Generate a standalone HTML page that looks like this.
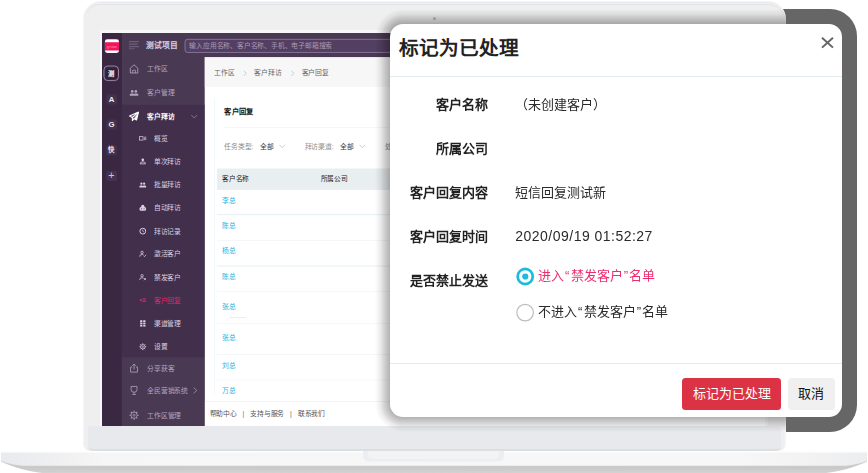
<!DOCTYPE html>
<html lang="zh-CN">
<head>
<meta charset="utf-8">
<title>标记为已处理</title>
<style>
*{box-sizing:border-box;margin:0;padding:0}
html,body{width:868px;height:473px;overflow:hidden;background:#fff}
body{position:relative;font-family:"Liberation Sans",sans-serif;color:#333}
.abs{position:absolute}
/* ---------- laptop ---------- */
#dark{left:376px;top:9px;width:481px;height:423px;border-radius:27px;background:#666}
#base{left:0;top:450px;width:868px;height:23px}
#lid{left:82.5px;top:1.3px;width:703.4px;height:449.6px;border-radius:18px 18px 7px 7px;background:#efefef;overflow:hidden;border:1.5px solid #f5f5f6;border-top-width:1px;border-bottom-width:0;box-shadow:inset 0 1px 0 0 #e9eaed,inset 0 2px 0 0 #f1f1f2,inset 0 3px 0 0 #e1e5e7,inset 1px 0 0 0 #f1f1f2,inset -1px 0 0 0 #f1f1f2}
#lid .chin{left:4.2px;right:3.9px;top:423.6px;bottom:0;background:#e8e9ec;border-radius:0 0 5px 5px;border-bottom:2.5px solid #dddee0}
#lid .cam{left:349.3px;top:15.2px;width:3px;height:3px;border-radius:50%;background:#b9b9bb}
#screenrim{left:100px;top:30px;width:667.5px;height:396.4px;background:#f7f7f9}
#screen{left:102.1px;top:32.7px;width:663.4px;height:393.7px;overflow:hidden;background:#fff}
#app{left:0;top:0;width:1366px;height:811px;transform:scale(.48565);transform-origin:0 0;font-size:14px;background:#4a3953}
/* ---------- app ---------- */
#strip{left:0;top:0;width:41px;height:811px;background:#3a2843}
#hdr{left:41px;top:0;width:1325px;height:50px;background:#4a3953}
#menu{left:41px;top:50px;width:170px;height:761px;background:#4a3953}
#menu .sub{left:0;top:98px;width:170px;height:520px;background:#412f4c}
.mi{left:0;width:170px;height:24px;line-height:24px;margin-top:-12px;color:#b1a4bd;white-space:nowrap}
.mi span{position:absolute;left:52px;top:0}
.mi svg{position:absolute;left:14px;top:1px;width:22px;height:22px}
.mi.s{color:#d9d1e0}
.mi.s span{left:65.5px}
.mi.s svg{left:35px;top:4px;width:16px;height:16px}
.mi.on{color:#e5246b}
.sbx{left:8.5px;width:22px;height:21px;border-radius:4px;background:#43314e;color:#efe9f3;font-weight:bold;font-size:16px;line-height:21px;text-align:center}

/* ---------- content ---------- */
#cont{left:211px;top:50px;width:1155px;height:761px;background:#fff;color:#333}
#cont .t{position:absolute;white-space:nowrap;height:20px;line-height:20px;margin-top:-10px}
#bc{left:0;top:0;width:1155px;height:61px;background:#f7f7f8}
#card{left:20px;top:83px;width:1200px;height:611px;border:1.5px solid #dcedf5;border-bottom:none;border-radius:4px 4px 0 0}
.sep{left:26px;width:1200px;height:1.3px;background:#e6eef3}
.nm{color:#1db1de}
#ft{left:0;top:708px;width:1155px;height:53px;background:#fff;border-top:1.5px solid #e4eaee;color:#555}
/* ---------- modal ---------- */
#shclip{left:83.3px;top:1.3px;width:702.6px;height:449.6px;border-radius:18px 18px 7px 7px;overflow:hidden}
#shclip i{position:absolute;display:block}
#modal{left:390px;top:24px;width:452px;height:393px;border-radius:13px;background:#fff;font-size:13px;color:#333}
#modal .ttl{left:8.6px;top:11.5px;height:25px;line-height:25px;font-size:19.65px;font-weight:bold;color:#222;white-space:nowrap}
#modal .ln{left:0;width:452.1px;height:1px;background:#e3ebee}
#modal .lb{left:0;width:97.6px;text-align:right;font-weight:bold;color:#222;height:18px;line-height:18px;margin-top:-9px;white-space:nowrap}
#modal .vl{color:#2a2a2a;left:124.8px;height:18px;line-height:18px;margin-top:-9px;white-space:nowrap}
.rd{left:126.1px;width:17.6px;height:17.6px;border-radius:50%;margin-top:-8.8px}
.q{font-weight:normal;margin:0 1.2px}
.btn{top:354px;height:31.5px;line-height:31px;border-radius:3.5px;text-align:center;white-space:nowrap}
</style>
</head>
<body>
<div id="dark" class="abs"></div>
<svg id="base" class="abs" viewBox="0 0 868 23">
<defs><linearGradient id="bg1" x1="0" x2="1" y1="0" y2="0"><stop offset="0" stop-color="#e8eaee"/><stop offset=".06" stop-color="#efeff1"/><stop offset=".12" stop-color="#f6f6f6"/><stop offset=".85" stop-color="#f7f7f7"/><stop offset=".95" stop-color="#f1f1f2"/><stop offset="1" stop-color="#ecedef"/></linearGradient>
<linearGradient id="bg2" x1="0" x2="0" y1="0" y2="1"><stop offset="0" stop-color="#d8d8d8"/><stop offset=".75" stop-color="#c9c9c9"/><stop offset="1" stop-color="#d2d2d2"/></linearGradient></defs>
<path d="M1 1.5 H867 V11.5 C858 16 840 21.5 826 23 H42 C28 21.500 10 16 1 11.500 Z" fill="url(#bg2)"/>
<path d="M1 1.5 H867 V10.500 C862 13 852 15.800 842 15.800 H26 C16 15.800 6 13 1 10.500 Z" fill="url(#bg1)"/>
<rect x="1" y="1" width="866" height="1.6" fill="#fcfefe"/>
<path d="M363 1 H504 V5.5 Q504 11.4 498 11.4 H369 Q363 11.4 363 5.5 Z" fill="#eceef1"/>
<path d="M368 1 H499 V4 Q499 9 494 9 H373 Q368 9 368 4 Z" fill="#f3f3f4"/>
</svg>
<div id="lid" class="abs"><div class="chin abs"></div><div class="cam abs"></div></div>
<div id="screenrim" class="abs"></div>
<div id="screen" class="abs">
<div id="app" class="abs">
  <div id="strip" class="abs">
    <div class="abs" style="left:6px;top:13px;width:29px;height:28px;border-radius:5px;background:#fff;overflow:hidden"><div class="abs" style="left:0;top:5.5px;width:29px;height:17px;background:#f5145b;color:#ff9dbb;font-size:8.500px;line-height:17px;text-align:center;letter-spacing:.800px">grow</div></div>
    <div class="abs" style="left:3px;top:67px;width:32px;height:32px;border-radius:9px;border:2.200px solid #9a86a8"></div>
    <div class="abs sbx" style="top:72.5px;font-size:13px;background:#2f1e38;color:#fff">测</div>
    <div class="abs sbx" style="top:126px">A</div>
    <div class="abs sbx" style="top:178px">G</div>
    <div class="abs sbx" style="top:231px;font-size:13px">快</div>
    <div class="abs sbx" style="top:283.5px;background:#45324f;font-weight:normal;font-size:22px;line-height:19px;color:#cfc4d8">+</div>
  </div>
  <div id="hdr" class="abs">
    <svg class="abs" style="left:14px;top:16px;width:22px;height:18px" viewBox="0 0 22 18"><path d="M0 2H21M0 7H18M0 12.2H21M0 16.8H12" stroke="#857493" stroke-width="1.6" fill="none"/></svg>
    <div class="abs" style="left:50px;top:14px;font-size:16px;line-height:24px;font-weight:bold;color:#d9d0e1;white-space:nowrap">测试项目</div>
    <div class="abs" style="left:128.5px;top:12px;width:700px;height:28.5px;border:2px solid #88749a;border-radius:6px;background:#523f61;color:#a999b6;font-size:14px;line-height:24px;padding-left:8.500px;white-space:nowrap">输入应用名称、客户名称、手机、电子邮箱搜索</div>
  </div>
  <div id="cont" class="abs">
    <div id="bc" class="abs"></div>
    <div class="t" style="left:20px;top:31.6px;color:#666">工作区</div>
    <svg class="abs" style="left:79px;top:26px;width:9px;height:14px" viewBox="0 0 9 14" fill="none" stroke="#b5b5b5" stroke-width="1.300"><path d="M2 1.500l5 5.500-5 5.500"/></svg>
    <div class="t" style="left:102.500px;top:31.6px;color:#666">客户拜访</div>
    <svg class="abs" style="left:176.500px;top:26px;width:9px;height:14px" viewBox="0 0 9 14" fill="none" stroke="#b5b5b5" stroke-width="1.300"><path d="M2 1.500l5 5.500-5 5.500"/></svg>
    <div class="t" style="left:200px;top:31.6px;color:#666">客户回复</div>
    <div id="card" class="abs"></div>
    <div class="t" style="left:41px;top:112.200px;font-size:15px;font-weight:bold;color:#111">客户回复</div>
    <div class="sep abs" style="left:41px;top:144px"></div>
    <div class="t" style="left:41px;top:182.900px;color:#8c8c8c">任务类型:</div>
    <div class="t" style="left:114.500px;top:182.900px">全部</div>
    <svg class="abs" style="left:152.500px;top:178px;width:14px;height:10px" viewBox="0 0 14 10" fill="none" stroke="#b0b0b0" stroke-width="1.300"><path d="M1 2l6 6 6-6"/></svg>
    <div class="t" style="left:206px;top:182.900px;color:#8c8c8c">拜访渠道:</div>
    <div class="t" style="left:278.500px;top:182.900px">全部</div>
    <svg class="abs" style="left:317.500px;top:178px;width:14px;height:10px" viewBox="0 0 14 10" fill="none" stroke="#b0b0b0" stroke-width="1.300"><path d="M1 2l6 6 6-6"/></svg>
    <div class="t" style="left:372px;top:182.900px;color:#8c8c8c">处理状态:</div>
    <div class="abs" style="left:26.200px;top:228.800px;width:1200px;height:44.200px;background:#e9eef0"></div>
    <div class="t" style="left:36.200px;top:250.200px;color:#222;font-weight:500;font-size:13.800px">客户名称</div>
    <div class="t" style="left:239.200px;top:250.200px;color:#222;font-weight:500;font-size:13.800px">所属公司</div>
    <div class="t nm" style="left:36.200px;top:294.500px">李总</div>
    <div class="sep abs" style="top:323.400px"></div>
    <div class="t nm" style="left:36.200px;top:346.600px">陈总</div>
    <div class="sep abs" style="top:376.800px"></div>
    <div class="t nm" style="left:36.200px;top:398.700px">杨总</div>
    <div class="sep abs" style="top:429.300px"></div>
    <div class="t nm" style="left:36.200px;top:450.500px">陈总</div>
    <div class="sep abs" style="top:482px"></div>
    <div class="t nm" style="left:36.200px;top:514.400px">张总</div>
    <div class="abs" style="left:51px;top:534.800px;width:34.500px;height:1.600px;background:#dfe5ad"></div>
    <div class="sep abs" style="top:547.900px"></div>
    <div class="t nm" style="left:36.200px;top:577.200px">张总</div>
    <div class="sep abs" style="top:612.100px"></div>
    <div class="t nm" style="left:36.200px;top:634.200px">刘总</div>
    <div class="sep abs" style="top:664.200px"></div>
    <div class="t nm" style="left:36.200px;top:686.300px">万总</div>
    <div id="ft" class="abs">
      <div class="t" style="left:10.600px;top:25.400px">帮助中心</div>
      <div class="t" style="left:78.500px;top:25.400px;color:#666">|</div>
      <div class="t" style="left:94px;top:25.400px">支持与服务</div>
      <div class="t" style="left:176px;top:25.400px;color:#666">|</div>
      <div class="t" style="left:192px;top:25.400px">联系我们</div>
    </div>
  </div>
  <div id="menu" class="abs">
    <div class="sub abs"></div>
    <div class="abs" style="left:0;top:618px;width:170px;height:143px;background:#4a3953"></div>
    <div class="abs mi " style="top:24.1px;"><svg viewBox="0 0 20 20" fill="none" stroke="currentColor" stroke-width="1.5" ><path d="M3 8.600 10 2.200l7 6.400V17.600H3z" stroke-width="1.600"/><path d="M7.400 17.600v-5.200h5.200v5.200" stroke-width="1.400"/></svg><span>工作区</span></div>
    <div class="abs mi " style="top:72.9px;"><svg viewBox="0 0 20 20" fill="none" stroke="currentColor" stroke-width="1.5" ><g fill="currentColor" stroke="none"><circle cx="6.6" cy="7.6" r="2.5"/><circle cx="13.4" cy="7.6" r="2.5"/><path d="M2 15.6v-2.2q0-2.2 3-2.2h3.2q1.8 0 1.8 1.6 0-1.6 1.8-1.6H15q3 0 3 2.2v2.2z"/></g></svg><span>客户管理</span></div>
    <div class="abs mi " style="top:122.1px;color:#fff;font-weight:bold"><svg viewBox="0 0 20 20" fill="none" stroke="currentColor" stroke-width="1.5" ><path d="M18.4 1.600 1.600 9l5.200 2.800zM18.400 1.600 6.800 11.800v5.800l3-3.800 4.800 2.800z" stroke-width="2" stroke-linejoin="round"/><path d="M18.400 1.600 10 13.600l4.600 3z" fill="currentColor" stroke="none"/></svg><span>客户拜访</span></div>
    <div class="abs mi s" style="top:167.4px;"><svg viewBox="0 0 16 16" fill="none" stroke="currentColor" stroke-width="1.5" ><rect x="1" y="4.5" width="7.5" height="7" stroke-width="1.5"/><path d="M10.5 5.5h5M10.5 8h5M10.5 10.5h5" stroke-width="1.4"/></svg><span>概览</span></div>
    <div class="abs mi s" style="top:215.0px;"><svg viewBox="0 0 16 16" fill="none" stroke="currentColor" stroke-width="1.5" ><circle cx="8" cy="4.200" r="2.700" fill="currentColor" stroke="none"/><path d="M2.400 12.400q0-4.200 5.600-4.200t5.600 4.200z" stroke-width="1.700"/></svg><span>单次拜访</span></div>
    <div class="abs mi s" style="top:262.6px;"><svg viewBox="0 0 16 16" fill="none" stroke="currentColor" stroke-width="1.5" ><g fill="currentColor" stroke="none"><circle cx="5.2" cy="5.2" r="2.3"/><circle cx="10.8" cy="5.2" r="2.3"/><path d="M1 13v-2q0-2.2 2.6-2.2h2.6q1.8 0 1.8 1.6 0-1.6 1.8-1.6h2.600q2.600 0 2.600 2.200v2z"/></g></svg><span>批量拜访</span></div>
    <div class="abs mi s" style="top:310.2px;"><svg viewBox="0 0 16 16" fill="none" stroke="currentColor" stroke-width="1.5" ><g fill="currentColor" stroke="none"><path d="M8 1.500q3.400 0 3.400 3.600v1.200q3.600.5 3.600 3.900 0 3.800-4 3.800H5q-4 0-4-3.800 0-3.400 3.600-3.900V5.100Q4.600 1.500 8 1.500z"/></g><circle cx="5.300" cy="10" r="1.100" fill="#412f4c" stroke="none"/><circle cx="10.700" cy="10" r="1.100" fill="#412f4c" stroke="none"/></svg><span>自动拜访</span></div>
    <div class="abs mi s" style="top:357.8px;"><svg viewBox="0 0 16 16" fill="none" stroke="currentColor" stroke-width="1.5" ><circle cx="8" cy="8" r="6" stroke-width="2"/><path d="M8 4.600V8.300l2.300 1.300" stroke-width="1.500"/></svg><span>拜访记录</span></div>
    <div class="abs mi s" style="top:405.4px;"><svg viewBox="0 0 16 16" fill="none" stroke="currentColor" stroke-width="1.5" ><circle cx="6.500" cy="4.800" r="2.500" stroke-width="1.600"/><path d="M1.500 13.500q0-4.500 5-4.500 2 0 3 .800" stroke-width="1.600"/><path d="M9.500 11.500l2 2 3.500-4" stroke-width="1.600"/></svg><span>激活客户</span></div>
    <div class="abs mi s" style="top:453.0px;"><svg viewBox="0 0 16 16" fill="none" stroke="currentColor" stroke-width="1.5" ><circle cx="6.500" cy="4.800" r="2.500" stroke-width="1.600"/><path d="M1.500 13.500q0-4.500 5-4.500 2 0 3 .800" stroke-width="1.600"/><path d="M10 9.500l4.500 4.500M14.500 9.500 10 14" stroke-width="1.600"/></svg><span>禁发客户</span></div>
    <div class="abs mi s on" style="top:500.6px;"><svg viewBox="0 0 16 16" fill="none" stroke="currentColor" stroke-width="1.5" ><path d="M5.500 3.500v7L1 7z" fill="currentColor" stroke="none"/><path d="M7.500 4.200h7M7.500 7h7M7.500 9.800h7" stroke-width="1.700"/></svg><span>客户回复</span></div>
    <div class="abs mi s" style="top:548.2px;"><svg viewBox="0 0 16 16" fill="none" stroke="currentColor" stroke-width="1.5" ><g fill="currentColor" stroke="none"><rect x="2.500" y="1.500" width="4.600" height="3.600"/><rect x="8.900" y="1.500" width="4.600" height="3.600"/><rect x="2.500" y="6.200" width="4.600" height="3.600"/><rect x="8.900" y="6.200" width="4.600" height="3.600"/><rect x="2.500" y="10.900" width="4.600" height="3.600"/><rect x="8.900" y="10.900" width="4.600" height="3.600"/></g></svg><span>渠道管理</span></div>
    <div class="abs mi s" style="top:595.8px;"><svg viewBox="0 0 16 16" fill="none" stroke="currentColor" stroke-width="1.5" ><circle cx="8" cy="8" r="4.600" stroke-width="1.500"/><circle cx="8" cy="8" r="1.600" stroke-width="1.300"/><path d="M8 1v2.400M8 12.600V15M1 8h2.400M12.600 8H15M3 3l1.700 1.700M11.300 11.300 13 13M13 3l-1.700 1.700M4.700 11.300 3 13" stroke-width="1.800"/></svg><span>设置</span></div>
    <div class="abs mi " style="top:640.4px;"><svg viewBox="0 0 20 20" fill="none" stroke="currentColor" stroke-width="1.5" ><path d="M6.500 8H3.500v9.500h13V8h-3"/><path d="M10 12.500V2.500M6.800 5.500 10 2.300l3.200 3.200"/></svg><span>分享获客</span></div>
    <div class="abs mi " style="top:685.7px;"><svg viewBox="0 0 20 20" fill="none" stroke="currentColor" stroke-width="1.5" ><path d="M4.500 2.500h11v6q0 5-5.500 5t-5.500-5z"/><path d="M10 13.500v3.500M6.500 17.500h7"/></svg><span>全民营销系统</span></div>
    <div class="abs mi " style="top:737.2px;"><svg viewBox="0 0 20 20" fill="none" stroke="currentColor" stroke-width="1.5" ><circle cx="10" cy="10" r="5.800" stroke-width="1.400"/><circle cx="10" cy="10" r="2" stroke-width="1.300"/><path d="M10 1.500v2.700M10 15.800v2.700M1.500 10h2.700M15.800 10h2.700M4 4l1.900 1.900M14.100 14.100 16 16M16 4l-1.900 1.900M5.900 14.100 4 16" stroke-width="2"/></svg><span>工作区管理</span></div>
    <svg class="abs" style="left:142px;top:116px;width:14px;height:12px" viewBox="0 0 14 12" fill="none" stroke="#a494b2" stroke-width="1.400"><path d="M1 3l6 6 6-6"/></svg>
    <svg class="abs" style="left:146px;top:677.500px;width:10px;height:16px" viewBox="0 0 10 16" fill="none" stroke="#b9adc5" stroke-width="1.400"><path d="M2 2l6 6-6 6"/></svg>
  </div>
</div>
</div>
<div id="shclip" class="abs">
  <i style="left:291.7px;top:35.7px;width:15px;height:367px;background:linear-gradient(to right,rgba(0,0,0,0),rgba(0,0,0,.07) 5px,rgba(0,0,0,.17) 9px,rgba(0,0,0,.3) 15px)"></i>
  <i style="left:319.7px;top:7.7px;width:426px;height:15px;background:linear-gradient(to bottom,rgba(0,0,0,0),rgba(0,0,0,.07) 5px,rgba(0,0,0,.17) 9px,rgba(0,0,0,.3) 15px)"></i>
  <i style="left:319.7px;top:415.7px;width:426px;height:15px;background:linear-gradient(to top,rgba(0,0,0,0),rgba(0,0,0,.07) 5px,rgba(0,0,0,.17) 9px,rgba(0,0,0,.3) 15px)"></i>
  <i style="left:291.7px;top:7.7px;width:28px;height:28px;background:radial-gradient(circle at 100% 100%,rgba(0,0,0,.3) 13px,rgba(0,0,0,.17) 19px,rgba(0,0,0,.07) 23px,rgba(0,0,0,0) 28px)"></i>
  <i style="left:291.7px;top:402.7px;width:28px;height:28px;background:radial-gradient(circle at 100% 0,rgba(0,0,0,.3) 13px,rgba(0,0,0,.17) 19px,rgba(0,0,0,.07) 23px,rgba(0,0,0,0) 28px)"></i>
</div>
<div id="modal" class="abs">
  <div class="ttl abs">标记为已处理</div>
  <svg class="abs" style="left:431px;top:13.300px;width:13px;height:11.4px" viewBox="0 0 13 12" preserveAspectRatio="none" fill="none" stroke="#666" stroke-width="2"><path d="M1 .800l11 10.400M12 .800 1 11.200"/></svg>
  <div class="ln abs" style="top:52.200px"></div>
  <div class="lb abs" style="top:81.000px">客户名称</div>
  <div class="vl abs" style="top:81.000px">（未创建客户）</div>
  <div class="lb abs" style="top:125.000px">所属公司</div>
  <div class="lb abs" style="top:169.000px">客户回复内容</div>
  <div class="vl abs" style="top:169.000px">短信回复测试新</div>
  <div class="lb abs" style="top:213.000px">客户回复时间</div>
  <div class="vl abs" style="top:212.300px;left:125.300px;font-size:14px;letter-spacing:.480px">2020/09/19 01:52:27</div>
  <div class="lb abs" style="top:257.000px">是否禁止发送</div>
  <svg class="abs" style="left:124.9px;top:241.500px;width:21px;height:21px" viewBox="0 0 21 21"><circle cx="10.200" cy="10.500" r="7.550" fill="#fff" stroke="#1cbbdd" stroke-width="2.700"/><circle cx="10.300" cy="10.500" r="3.100" fill="#1cbbdd"/></svg>
  <div class="vl abs" style="top:252.000px;left:147.800px;color:#ee2d6d">进入<b class="q">“</b>禁发客户<b class="q">”</b>名单</div>
  <svg class="abs" style="left:124.9px;top:277.500px;width:21px;height:21px" viewBox="0 0 21 21"><circle cx="10.100" cy="10.600" r="8.300" fill="#fff" stroke="#bdbdbd" stroke-width="1.200"/></svg>
  <div class="vl abs" style="top:288.000px;left:147.800px">不进入<b class="q">“</b>禁发客户<b class="q">”</b>名单</div>
  <div class="ln abs" style="top:338.800px"></div>
  <div class="btn abs" style="left:292px;width:99.300px;background:#dc3245;color:#fff">标记为已处理</div>
  <div class="btn abs" style="left:397.800px;width:47.300px;background:#f0f0f0;color:#111">取消</div>
</div>
</body>
</html>
